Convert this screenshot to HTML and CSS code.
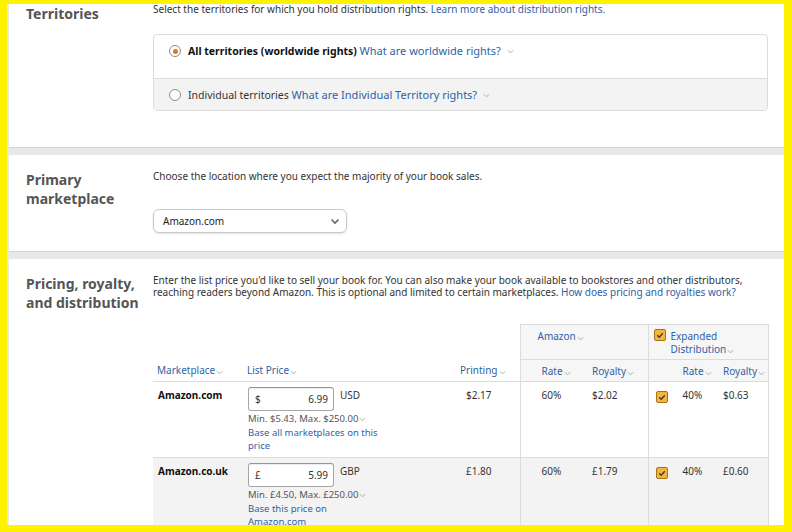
FILE: index.html
```html
<!DOCTYPE html>
<html lang="en">
<head>
    <meta charset="UTF-8">
    <meta name="viewport" content="width=device-width, initial-scale=1.0">
    <title>Paperback Rights &amp; Pricing</title>
    <link rel="stylesheet" href="styles.css">
</head>
<body>

<div class="frame">
<div class="page">

    <!-- Territories -->
    <section class="card card-territories">
        <h3 class="card-title">Territories</h3>
        <div class="card-body">
            <p class="desc">Select the territories for which you hold distribution rights. <a href="#">Learn more about distribution rights.</a></p>
            <div class="radio-box">
                <label class="radio-row">
                    <span class="radio checked"></span>
                    <span><b>All territories (worldwide rights)</b> <a href="#">What are worldwide rights?</a><svg class="chev" viewBox="0 0 8 5"><path d="M1 1l3 3 3-3"/></svg></span>
                </label>
                <label class="radio-row alt">
                    <span class="radio"></span>
                    <span>Individual territories <a href="#">What are Individual Territory rights?</a><svg class="chev" viewBox="0 0 8 5"><path d="M1 1l3 3 3-3"/></svg></span>
                </label>
            </div>
        </div>
    </section>

    <!-- Primary marketplace -->
    <section class="card card-market">
        <h3 class="card-title">Primary<br>marketplace</h3>
        <div class="card-body">
            <p class="desc">Choose the location where you expect the majority of your book sales.</p>
            <div class="select">
                <span>Amazon.com</span>
                <svg class="select-arrow" viewBox="0 0 10 7"><path d="M1.5 1.5l3.5 3.5 3.5-3.5"/></svg>
            </div>
        </div>
    </section>

    <!-- Pricing -->
    <section class="card card-pricing">
        <h3 class="card-title">Pricing, royalty,<br>and distribution</h3>
        <div class="card-body">
            <p class="desc desc-tight">Enter the list price you'd like to sell your book for. You can also make your book available to bookstores and other distributors, reaching readers beyond Amazon. This is optional and limited to certain marketplaces. <a href="#">How does pricing and royalties work?</a></p>

            <table class="price-table">
                <colgroup>
                    <col style="width: 90px">
                    <col style="width: 177px">
                    <col style="width: 100px">
                    <col style="width: 64px">
                    <col style="width: 64px">
                    <col style="width: 67px">
                    <col style="width: 53px">
                </colgroup>
                <tr class="group-row">
                    <th></th>
                    <th></th>
                    <th></th>
                    <th colspan="2" class="group amazon-group"><span class="sort">Amazon<svg viewBox="0 0 8 5"><path d="M1 1l3 3 3-3"/></svg></span></th>
                    <th colspan="2" class="group expanded-group">
                        <div class="expanded-head">
                            <span class="check"><svg viewBox="0 0 10 10"><path d="M2.2 5.2l2 2 3.6-4"/></svg></span>
                            <span class="sort">Expanded<br>Distribution<svg viewBox="0 0 8 5"><path d="M1 1l3 3 3-3"/></svg></span>
                        </div>
                    </th>
                </tr>
                <tr class="head-row">
                    <th class="c-market"><span class="sort">Marketplace<svg viewBox="0 0 8 5"><path d="M1 1l3 3 3-3"/></svg></span></th>
                    <th class="c-list"><span class="sort">List Price<svg viewBox="0 0 8 5"><path d="M1 1l3 3 3-3"/></svg></span></th>
                    <th class="c-print"><span class="sort">Printing<svg viewBox="0 0 8 5"><path d="M1 1l3 3 3-3"/></svg></span></th>
                    <th class="c-rate shaded"><span class="sort">Rate<svg viewBox="0 0 8 5"><path d="M1 1l3 3 3-3"/></svg></span></th>
                    <th class="c-roy shaded"><span class="sort">Royalty<svg viewBox="0 0 8 5"><path d="M1 1l3 3 3-3"/></svg></span></th>
                    <th class="c-erate shaded"><span class="sort">Rate<svg viewBox="0 0 8 5"><path d="M1 1l3 3 3-3"/></svg></span></th>
                    <th class="c-eroy shaded"><span class="sort">Royalty<svg viewBox="0 0 8 5"><path d="M1 1l3 3 3-3"/></svg></span></th>
                </tr>
                <tr class="data-row">
                    <td class="c-market"><b>Amazon.com</b></td>
                    <td class="c-list">
                        <div class="price-line">
                            <label class="price-input"><span>$</span><input type="text" value="6.99"></label>
                            <span class="code">USD</span>
                        </div>
                        <div class="minmax">Min. $5.43, Max. $250.00<svg viewBox="0 0 8 5"><path d="M1 1l3 3 3-3"/></svg></div>
                        <a href="#" class="base-link">Base all marketplaces on this price</a>
                    </td>
                    <td class="c-print">$2.17</td>
                    <td class="c-rate">60%</td>
                    <td class="c-roy">$2.02</td>
                    <td class="c-erate"><div class="erate"><span class="check"><svg viewBox="0 0 10 10"><path d="M2.2 5.2l2 2 3.6-4"/></svg></span>40%</div></td>
                    <td class="c-eroy">$0.63</td>
                </tr>
                <tr class="data-row alt">
                    <td class="c-market"><b>Amazon.co.uk</b></td>
                    <td class="c-list">
                        <div class="price-line">
                            <label class="price-input"><span>£</span><input type="text" value="5.99"></label>
                            <span class="code">GBP</span>
                        </div>
                        <div class="minmax">Min. £4.50, Max. £250.00<svg viewBox="0 0 8 5"><path d="M1 1l3 3 3-3"/></svg></div>
                        <a href="#" class="base-link">Base this price on Amazon.com</a>
                    </td>
                    <td class="c-print">£1.80</td>
                    <td class="c-rate">60%</td>
                    <td class="c-roy">£1.79</td>
                    <td class="c-erate"><div class="erate"><span class="check"><svg viewBox="0 0 10 10"><path d="M2.2 5.2l2 2 3.6-4"/></svg></span>40%</div></td>
                    <td class="c-eroy">£0.60</td>
                </tr>
            </table>
        </div>
    </section>

</div>
</div>

</body>
</html>
```

FILE: styles.css
```css
* {
    box-sizing: border-box;
}
body {
    margin: 0;
    background-color: #fff200; /* highlight frame */
    font-family: "Noto Sans", "Open Sans", Arial, sans-serif;
    font-size: 10px;
    color: #333;
}
a {
    color: #2f62a6;
    text-decoration: none;
}
.frame {
    height: 532px;
    padding: 4px 8px 7px 7px;
}
.page {
    height: 521px;
    overflow: hidden;
    background-color: #e8e8e8;
    padding-left: 2px;
}

/* cards */
.card {
    display: grid;
    grid-template-columns: 127px 615px;
    padding-left: 17px;
    background-color: #fff;
    border-bottom: 1px solid #d5d5d5;
    margin-bottom: 7px;
}
.card-title {
    margin: 0;
    font-size: 14px;
    line-height: 19px;
    font-weight: bold;
    color: #555;
}
.desc {
    margin: 0;
    line-height: 14px;
}
.desc-tight {
    line-height: 12px;
}

.card-territories {
    margin-top: -2px;
    padding-bottom: 36px;
}
.card-territories .card-title {
    margin-top: 2px;
}
.card-market {
    padding-top: 14px;
    padding-bottom: 18px;
}
.card-market .card-title {
    margin-top: 1px;
}
.card-pricing {
    padding-top: 15px;
    padding-bottom: 40px;
}

/* radio group */
.radio-box {
    margin-top: 18px;
    border: 1px solid #dcdcdc;
    border-radius: 4px;
    overflow: hidden;
    font-size: 10.5px;
}
.radio-box a {
    font-size: 11px;
}
.radio-row {
    display: flex;
    align-items: center;
    gap: 7px;
    height: 43px;
    padding: 0 15px 11px;
    line-height: 14px;
}
.radio-row.alt {
    height: 32px;
    padding-bottom: 0;
    border-top: 1px solid #dcdcdc;
    background-color: #f3f3f3;
}
.radio-row b {
    color: #111;
}
.radio {
    width: 12px;
    height: 12px;
    flex: none;
    border: 1px solid #8d8d8d;
    border-radius: 50%;
    background-color: #fff;
    display: flex;
    align-items: center;
    justify-content: center;
}
.radio.checked::after {
    content: "";
    width: 5px;
    height: 5px;
    border-radius: 50%;
    background-color: #e47911;
}
.chev {
    width: 7px;
    height: 5px;
    margin-left: 6px;
    vertical-align: 1px;
}
.chev path,
.sort svg path,
.minmax svg path {
    fill: none;
    stroke: #a3a3a3;
    stroke-width: 1;
}

/* select */
.select {
    margin-top: 26px;
    width: 194px;
    height: 24px;
    border: 1px solid #c9c9c9;
    border-radius: 6px;
    box-shadow: 0 1px 2px rgba(0, 0, 0, 0.12);
    display: flex;
    align-items: center;
    justify-content: space-between;
    padding: 0 6px 0 9px;
    color: #222;
}
.select-arrow {
    width: 10px;
    height: 7px;
}
.select-arrow path {
    fill: none;
    stroke: #666;
    stroke-width: 1.6;
}

/* pricing table */
.price-table {
    margin-top: 26px;
    width: 615px;
    border-collapse: collapse;
    table-layout: fixed;
}
.price-table th,
.price-table td {
    padding: 0;
    text-align: left;
    vertical-align: top;
    font-weight: normal;
}
.sort {
    color: #2f62a6;
    white-space: nowrap;
}
.sort svg {
    width: 7px;
    height: 5px;
    margin-left: 1px;
    vertical-align: -1px;
}
.group-row {
    height: 35px;
}
.group {
    border: 1px solid #dcdcdc;
    background-color: #f6f6f6;
    line-height: 14px;
}
.amazon-group {
    padding: 4px 0 0 17px !important;
}
.expanded-group {
    padding: 4px 0 0 5px !important;
}
.expanded-head {
    display: flex;
    align-items: flex-start;
    gap: 5px;
}
.expanded-head .sort {
    line-height: 13px;
    white-space: normal;
    margin-top: 1px;
}
.head-row th {
    height: 22px;
    vertical-align: middle;
    line-height: 14px;
}
.shaded {
    background-color: #f6f6f6;
}
.c-market {
    padding-left: 4px !important;
}
.c-list {
    padding-left: 4px !important;
}
.head-row .c-print {
    text-align: right;
    padding-right: 14px !important;
}
.c-rate {
    border-left: 1px solid #dcdcdc;
    padding-left: 21px !important;
}
.c-roy {
    padding-left: 8px !important;
}
.c-erate {
    border-left: 1px solid #dcdcdc;
    padding-left: 34px !important;
}
.c-eroy {
    border-right: 1px solid #dcdcdc;
    padding-left: 8px !important;
}
.data-row td {
    border-top: 1px solid #dcdcdc;
    height: 76px;
    padding-top: 6px;
    line-height: 14px;
}
.data-row.alt td {
    background-color: #f3f3f3;
}
.data-row .c-market {
    padding-left: 5px !important;
}
.data-row .c-market b {
    color: #111;
}
.data-row .c-print {
    padding-left: 46px !important;
}
.data-row .c-erate {
    padding-left: 7px !important;
}
.erate {
    display: flex;
    gap: 15px;
    align-items: flex-start;
}
.erate .check {
    margin-top: 3px;
}
.data-row .c-list {
    padding-left: 5px !important;
}

.check {
    width: 12px;
    height: 12px;
    flex: none;
    border: 1px solid #a2751d;
    border-radius: 2px;
    background-color: #f5b43a;
    display: inline-flex;
    align-items: center;
    justify-content: center;
}
.check svg {
    width: 10px;
    height: 10px;
}
.check svg path {
    fill: none;
    stroke: #3b3b3b;
    stroke-width: 1.3;
}

.price-line {
    display: flex;
    align-items: flex-start;
    gap: 6px;
    margin-top: -1px;
}
.price-input {
    width: 86px;
    height: 24px;
    display: flex;
    align-items: center;
    border: 1px solid #a6a6a6;
    border-top-color: #949494;
    border-radius: 3px;
    background-color: #fff;
    box-shadow: inset 0 1px 0 rgba(0, 0, 0, 0.07);
    padding: 0 5px 0 6px;
}
.price-input input {
    width: 100%;
    border: none;
    padding: 0;
    background: transparent;
    text-align: right;
    font-family: inherit;
    font-size: 10px;
    color: #333;
}
.code {
    line-height: 14px;
    margin-top: 1px;
}
.minmax {
    margin-top: 2px;
    font-size: 9.5px;
    line-height: 12px;
    color: #555;
}
.minmax svg {
    width: 7px;
    height: 5px;
    margin-left: 1px;
}
.base-link {
    display: block;
    width: 132px;
    font-size: 9.5px;
    line-height: 13px;
    margin-top: 1px;
}
```
